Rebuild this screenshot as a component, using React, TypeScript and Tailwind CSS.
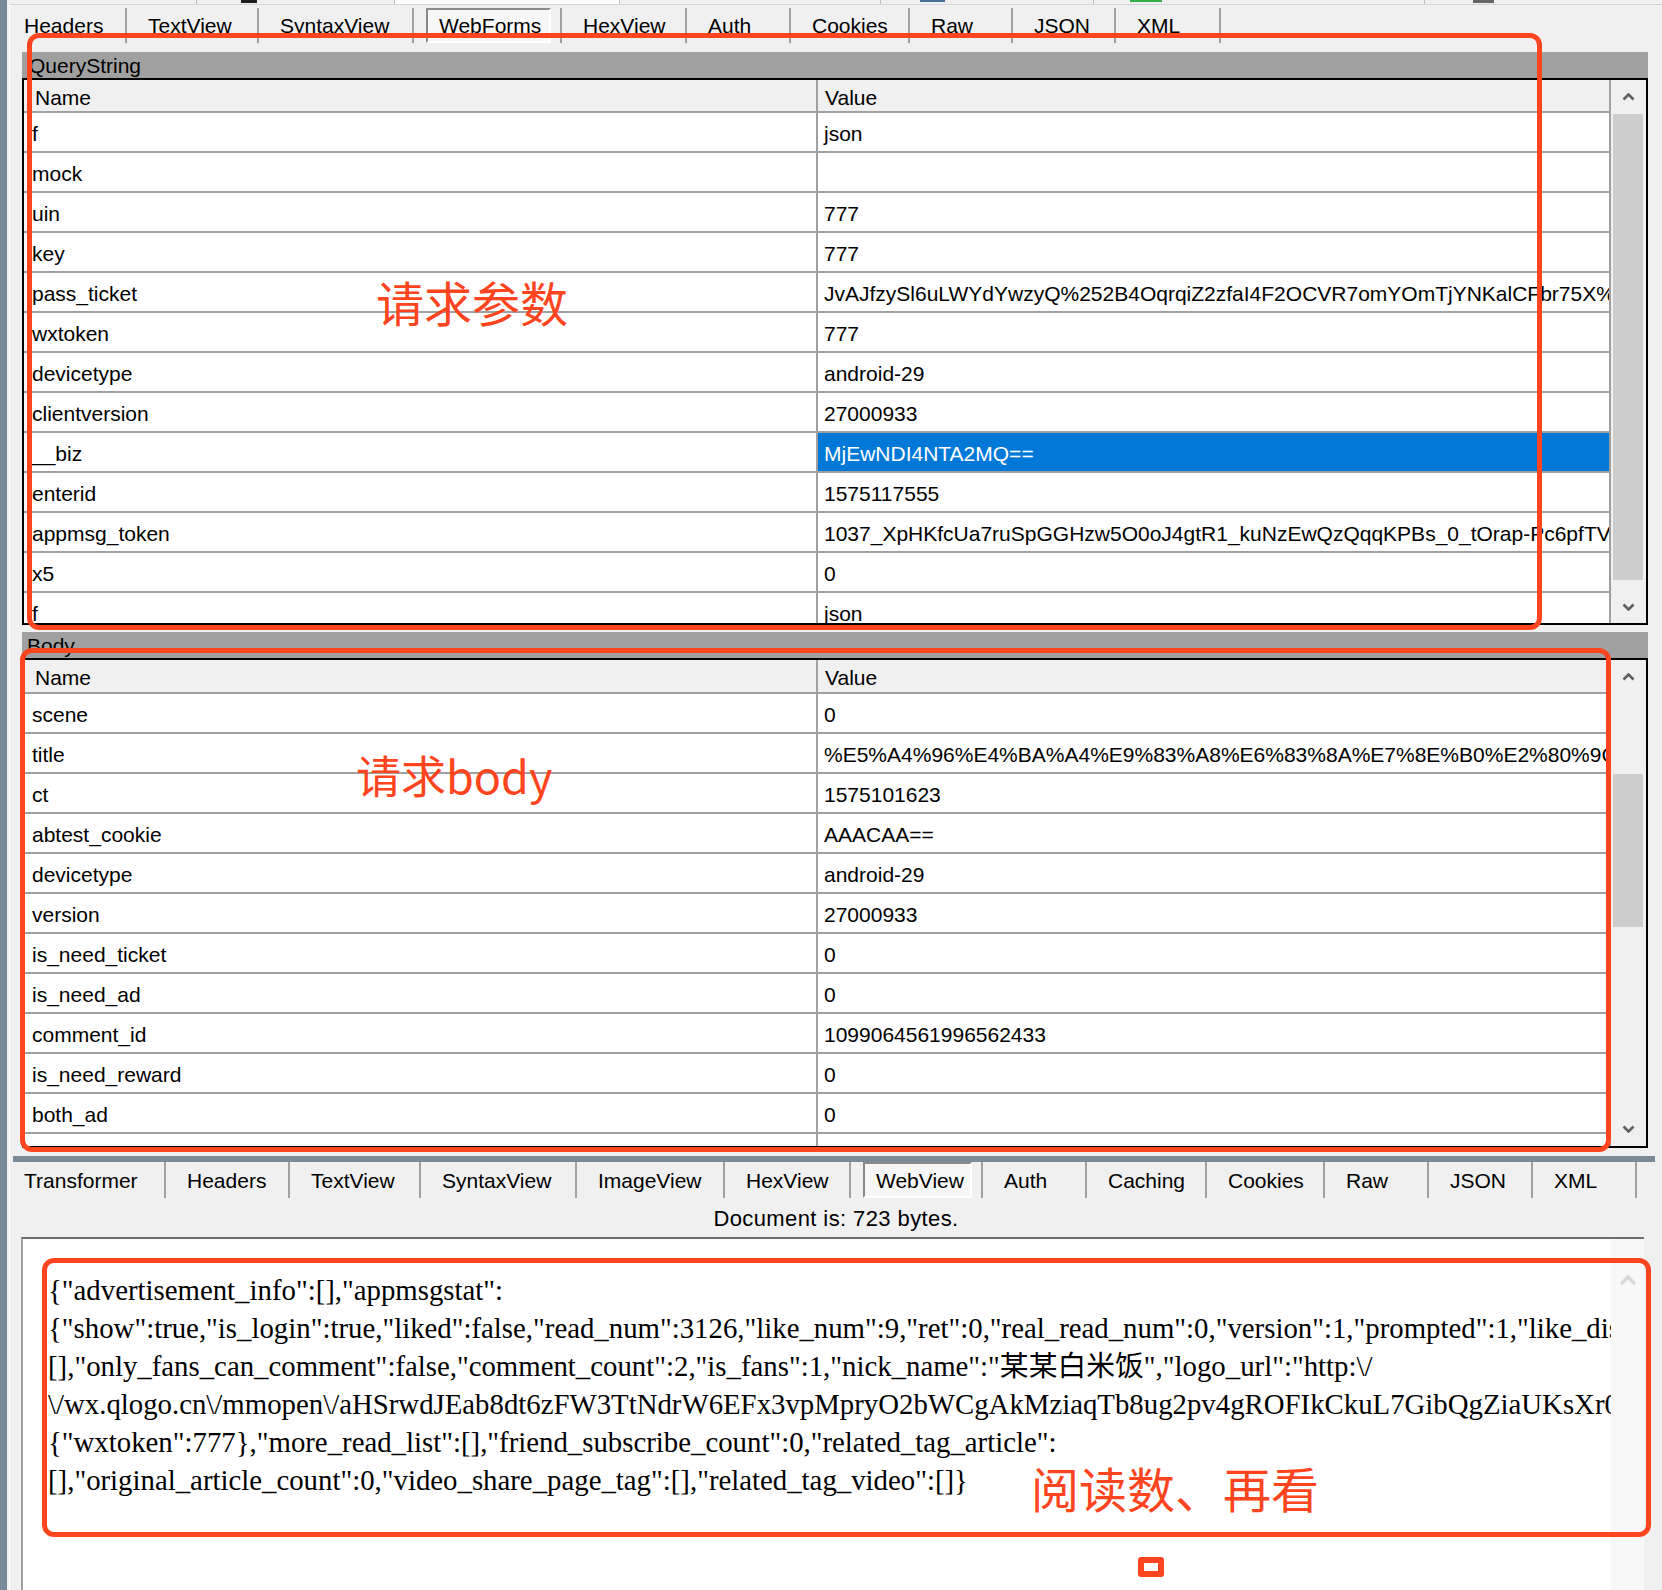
import React from "react";

type Tab = { label: string; w: string; pad?: string; box?: string };
type Row = { name: string; value: string; selected?: boolean };

const topTabs: Tab[] = [
  { label: "Headers", w: "w-[117px]", pad: "pl-[14px]" },
  { label: "TextView", w: "w-[132px]" },
  { label: "SyntaxView", w: "w-[155px]" },
  { label: "WebForms", w: "w-[148px]", box: "w-[125px]" },
  { label: "HexView", w: "w-[125px]" },
  { label: "Auth", w: "w-[104px]" },
  { label: "Cookies", w: "w-[119px]" },
  { label: "Raw", w: "w-[103px]" },
  { label: "JSON", w: "w-[103px]" },
  { label: "XML", w: "w-[105px]" },
];

const bottomTabs: Tab[] = [
  { label: "Transformer", w: "w-[153px]", pad: "pl-[11px]" },
  { label: "Headers", w: "w-[124px]" },
  { label: "TextView", w: "w-[131px]" },
  { label: "SyntaxView", w: "w-[156px]" },
  { label: "ImageView", w: "w-[148px]" },
  { label: "HexView", w: "w-[126px]" },
  { label: "WebView", w: "w-[132px]", box: "w-[109px]" },
  { label: "Auth", w: "w-[104px]" },
  { label: "Caching", w: "w-[120px]" },
  { label: "Cookies", w: "w-[118px]" },
  { label: "Raw", w: "w-[104px]" },
  { label: "JSON", w: "w-[104px]" },
  { label: "XML", w: "w-[104px]" },
];

const queryRows: Row[] = [
  { name: "f", value: "json" },
  { name: "mock", value: "" },
  { name: "uin", value: "777" },
  { name: "key", value: "777" },
  { name: "pass_ticket", value: "JvAJfzySl6uLWYdYwzyQ%252B4OqrqiZ2zfaI4F2OCVR7omYOmTjYNKalCFbr75X%252FqWm" },
  { name: "wxtoken", value: "777" },
  { name: "devicetype", value: "android-29" },
  { name: "clientversion", value: "27000933" },
  { name: "__biz", value: "MjEwNDI4NTA2MQ==", selected: true },
  { name: "enterid", value: "1575117555" },
  { name: "appmsg_token", value: "1037_XpHKfcUa7ruSpGGHzw5O0oJ4gtR1_kuNzEwQzQqqKPBs_0_tOrap-Pc6pfTV_gIaX" },
  { name: "x5", value: "0" },
  { name: "f", value: "json" },
];

const bodyRows: Row[] = [
  { name: "scene", value: "0" },
  { name: "title", value: "%E5%A4%96%E4%BA%A4%E9%83%A8%E6%83%8A%E7%8E%B0%E2%80%9C%E7%8E%8B" },
  { name: "ct", value: "1575101623" },
  { name: "abtest_cookie", value: "AAACAA==" },
  { name: "devicetype", value: "android-29" },
  { name: "version", value: "27000933" },
  { name: "is_need_ticket", value: "0" },
  { name: "is_need_ad", value: "0" },
  { name: "comment_id", value: "1099064561996562433" },
  { name: "is_need_reward", value: "0" },
  { name: "both_ad", value: "0" },
  { name: "send_time", value: "" },
];

const jsonLines = [
  '{"advertisement_info":[],"appmsgstat":',
  '{"show":true,"is_login":true,"liked":false,"read_num":3126,"like_num":9,"ret":0,"real_read_num":0,"version":1,"prompted":1,"like_disabled":false,"style":1}',
  '[],"only_fans_can_comment":false,"comment_count":2,"is_fans":1,"nick_name":"某某白米饭","logo_url":"http:\\/',
  '\\/wx.qlogo.cn\\/mmopen\\/aHSrwdJEab8dt6zFW3TtNdrW6EFx3vpMpryO2bWCgAkMziaqTb8ug2pv4gROFIkCkuL7GibQgZiaUKsXr0\\/132",',
  '{"wxtoken":777},"more_read_list":[],"friend_subscribe_count":0,"related_tag_article":',
  '[],"original_article_count":0,"video_share_page_tag":[],"related_tag_video":[]}',
];

function Chevron({ down, color = "#606060", w = 13, h = 8 }: { down?: boolean; color?: string; w?: number; h?: number }) {
  return (
    <svg width={w} height={h} viewBox="0 0 13 8">
      <polyline
        points={down ? "1.5,1.5 6.5,6.5 11.5,1.5" : "1.5,6.5 6.5,1.5 11.5,6.5"}
        fill="none"
        stroke={color}
        strokeWidth="2.6"
      />
    </svg>
  );
}

function TabStrip({ tabs, className }: { tabs: Tab[]; className: string }) {
  return (
    <div className={`flex ${className}`}>
      {tabs.map((t) => (
        <div key={t.label} className={`${t.w} shrink-0 h-full flex items-center border-r-2 border-[#a0a0a0]`}>
          {t.box ? (
            <div
              className={`${t.box} ml-[12px] h-full flex items-center pl-[11px] border-2 border-t-[#8a8a8a] border-l-[#8a8a8a] border-r-white border-b-white bg-[#f7f7f7]`}
            >
              {t.label}
            </div>
          ) : (
            <span className={t.pad ?? "pl-[21px]"}>{t.label}</span>
          )}
        </div>
      ))}
    </div>
  );
}

function ScrollBar({ btnH, gap, thumbH }: { btnH: string; gap: string; thumbH: string }) {
  return (
    <div className="w-[35px] shrink-0 flex flex-col bg-[#f0f0f0]">
      <div className={`${btnH} shrink-0 flex items-center justify-center`}>
        <Chevron />
      </div>
      <div className="flex-1 flex flex-col">
        <div className={`${gap} shrink-0`} />
        <div className={`${thumbH} shrink-0 ml-[2px] mr-[3px] bg-[#cdcdcd]`} />
      </div>
      <div className={`${btnH} shrink-0 flex items-center justify-center`}>
        <Chevron down />
      </div>
    </div>
  );
}

function Grid({
  rows,
  height,
  headerH,
  scroll,
}: {
  rows: Row[];
  height: string;
  headerH: string;
  scroll: { btnH: string; gap: string; thumbH: string };
}) {
  return (
    <div className={`${height} shrink-0 flex border-2 border-black bg-white`}>
      <div className="flex-1 min-w-0 flex flex-col overflow-hidden border-r-2 border-[#a0a0a0]">
        <div className={`${headerH} shrink-0 flex bg-[#f0f0f0] border-b-2 border-[#a0a0a0]`}>
          <div className="w-[794px] shrink-0 border-r-2 border-[#a0a0a0] pl-[11px] pt-[3px] flex items-center">Name</div>
          <div className="flex-1 pl-[7px] pt-[3px] flex items-center">Value</div>
        </div>
        {rows.map((r, i) => (
          <div key={i} className="h-[40px] shrink-0 flex border-b-2 border-[#a0a0a0]">
            <div className="w-[794px] shrink-0 border-r-2 border-[#a0a0a0] pl-[8px] pt-[2px] flex items-center whitespace-nowrap">
              {r.name}
            </div>
            <div
              className={`flex-1 min-w-0 pl-[6px] pt-[2px] flex items-center whitespace-nowrap overflow-hidden ${
                r.selected ? "bg-[#0078d7] text-white" : ""
              }`}
            >
              {r.value}
            </div>
          </div>
        ))}
      </div>
      <ScrollBar {...scroll} />
    </div>
  );
}

function TopStrip() {
  return (
    <div className="h-[5px] shrink-0 flex items-start border-b border-[#d4d4d4]">
      <div className="w-[186px] shrink-0" />
      <div className="w-px h-full shrink-0 bg-[#bdbdbd]" />
      <div className="w-[44px] shrink-0" />
      <div className="w-[16px] h-[3px] shrink-0 bg-[#1e1e1e]" />
      <div className="w-[137px] shrink-0" />
      <div className="w-px h-full shrink-0 bg-[#bdbdbd]" />
      <div className="w-[224px] h-full shrink-0 bg-white" />
      <div className="w-px h-full shrink-0 bg-[#bdbdbd]" />
      <div className="w-[260px] shrink-0" />
      <div className="w-px h-full shrink-0 bg-[#bdbdbd]" />
      <div className="w-[39px] shrink-0" />
      <div className="w-[25px] h-[2px] shrink-0 bg-[#4a6d93]" />
      <div className="w-[148px] shrink-0" />
      <div className="w-px h-full shrink-0 bg-[#bdbdbd]" />
      <div className="w-[36px] shrink-0" />
      <div className="w-[32px] h-[2px] shrink-0 bg-[#33ad4c]" />
      <div className="w-[262px] shrink-0" />
      <div className="w-px h-full shrink-0 bg-[#bdbdbd]" />
      <div className="w-[48px] shrink-0" />
      <div className="w-[21px] h-[3px] shrink-0 bg-[#666666]" />
    </div>
  );
}

export default function App() {
  return (
    <div className="relative w-[1662px] h-[1590px] overflow-hidden flex bg-[#f0f0f0] text-[21px] leading-none text-black font-['Liberation_Sans',Arial,sans-serif]">
      <div className="w-[7px] shrink-0 bg-[#7b8a99]" />
      <div className="w-[2px] shrink-0" />
      <div className="w-px shrink-0 mt-[5px] bg-white" />

      <div className="w-[1652px] shrink-0 flex flex-col">
        <TopStrip />
        <TabStrip tabs={topTabs} className="h-[35px] mt-[3px] shrink-0" />

        {/* QueryString */}
        <div className="mt-[9px] ml-[12px] w-[1626px] flex flex-col shrink-0">
          <div className="h-[26px] bg-[#a0a0a0] pl-[7px] flex items-center">QueryString</div>
          <Grid
            rows={queryRows}
            height="h-[547px]"
            headerH="h-[33px]"
            scroll={{ btnH: "h-[33px]", gap: "h-px", thumbH: "h-[466px]" }}
          />
        </div>

        {/* Body */}
        <div className="mt-[7px] ml-[12px] w-[1626px] flex flex-col shrink-0">
          <div className="h-[26px] bg-[#a0a0a0] pl-[5px] flex items-center">Body</div>
          <Grid
            rows={bodyRows}
            height="h-[490px]"
            headerH="h-[34px]"
            scroll={{ btnH: "h-[34px]", gap: "h-[80px]", thumbH: "h-[153px]" }}
          />
        </div>

        <div className="mt-[8px] ml-[3px] w-[1642px] h-[6px] shrink-0 bg-[#7b8a99]" />
        <TabStrip tabs={bottomTabs} className="h-[36px] ml-[3px] shrink-0" />

        <div className="h-[39px] shrink-0 pt-[3px] flex items-center justify-center text-[22px] tracking-[0.4px]">
          Document is: 723 bytes.
        </div>

        <div className="ml-[11px] w-[1623px] flex-1 min-h-0 flex border-t-2 border-t-[#6d6d6d] border-l-2 border-l-[#a0a0a0] bg-white">
          <div className="flex-1 min-w-0 overflow-hidden pl-[25px] pt-[32px] text-[28.8px] leading-[38px] font-['Liberation_Serif','Times_New_Roman','Noto_Sans_CJK_SC',serif]">
            {jsonLines.map((l, i) => (
              <div key={i} className="whitespace-nowrap">
                {l}
              </div>
            ))}
          </div>
          <div className="w-[33px] shrink-0 bg-[#f8f8f8] flex flex-col items-center pt-[36px]">
            <Chevron color="#d8d8d8" w={18} h={11} />
          </div>
        </div>
      </div>

      {/* annotations */}
      <div className="absolute left-[27px] top-[33px] w-[1515px] h-[597px] border-[5px] border-[#ff4520] rounded-[12px]" />
      <div className="absolute left-[20px] top-[648px] w-[1591px] h-[504px] border-[5px] border-[#ff4520] rounded-[12px]" />
      <div className="absolute left-[42px] top-[1258px] w-[1609px] h-[279px] border-[5px] border-[#ff4520] rounded-[12px]" />
      <div className="absolute left-[1138px] top-[1557px] w-[26px] h-[20px] border-[6px] border-[#ff4520] rounded-[3px]" />

      <div className="absolute left-[376px] top-[277px] text-[48px] leading-none text-[#ff4520] font-['Noto_Sans_CJK_SC',sans-serif]">
        请求参数
      </div>
      <div className="absolute left-[356px] top-[752px] text-[45px] leading-none text-[#ff4520] font-['Noto_Sans_CJK_SC',sans-serif]">
        请求body
      </div>
      <div className="absolute left-[1031px] top-[1463px] text-[48px] leading-none text-[#ff4520] font-['Noto_Sans_CJK_SC',sans-serif]">
        阅读数、再看
      </div>
    </div>
  );
}
